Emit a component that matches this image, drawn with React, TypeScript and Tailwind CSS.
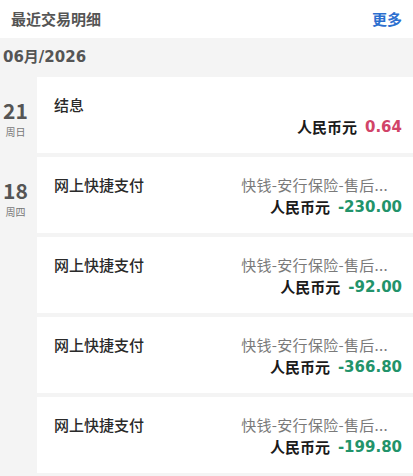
import React from "react";

type Txn = { title: string; desc?: string; amount: string; income?: boolean };
type Day = { day: string; week: string; items: Txn[] };

const days: Day[] = [
  { day: "21", week: "周日", items: [{ title: "结息", amount: "0.64", income: true }] },
  {
    day: "18",
    week: "周四",
    items: [
      { title: "网上快捷支付", desc: "快钱-安行保险-售后...", amount: "-230.00" },
      { title: "网上快捷支付", desc: "快钱-安行保险-售后...", amount: "-92.00" },
      { title: "网上快捷支付", desc: "快钱-安行保险-售后...", amount: "-366.80" },
      { title: "网上快捷支付", desc: "快钱-安行保险-售后...", amount: "-199.80" },
    ],
  },
];

const font = { fontFamily: '"Noto Sans CJK SC", "Noto Sans", sans-serif' };
const numFont = { fontFamily: '"DejaVu Sans", "Noto Sans CJK SC", sans-serif' };

const TxnCard = ({ t }: { t: Txn }) => (
  <div className="h-[76px] bg-white pl-[17px] pr-[11px] pt-[19px]">
    <div className="flex items-center justify-between h-[18px]">
      <span className="text-[15px] font-medium text-[#2a2a2a]">{t.title}</span>
      {t.desc && (
        <span className="text-[15px] tracking-[0.3px] text-[#7a7a7a] mr-[14px]">{t.desc}</span>
      )}
    </div>
    <div className="flex items-center justify-end h-[20px] mt-[3px]">
      <span className="text-[15px] font-bold text-[#1a1a1a]">人民币元</span>
      <span
        className={`ml-[8px] text-[15px] font-bold ${t.income ? "text-[#d14468]" : "text-[#22936a]"}`}
        style={numFont}
      >
        {t.amount}
      </span>
    </div>
  </div>
);

export default function App() {
  return (
    <div className="w-[413px] h-[476px] bg-[#f4f4f4] overflow-hidden" style={font}>
      <div className="h-[38px] bg-white flex items-center justify-between pl-[11px] pr-[11px]">
        <span className="text-[15px] font-bold text-[#555]">最近交易明细</span>
        <span className="text-[15px] font-bold text-[#2c6fcf]">更多</span>
      </div>
      <div className="h-[39px] flex items-center pl-[3px]">
        <span className="text-[15px] font-bold text-[#555]" style={numFont}>
          06月/2026
        </span>
      </div>
      <div className="flex flex-col gap-[4px]">
        {days.map((d) => (
          <div key={d.day} className="flex">
            <div className="w-[37px] shrink-0 flex flex-col items-center pt-[22px] pr-[6px]">
              <span className="text-[21px] leading-[22px] font-bold text-[#555]">{d.day}</span>
              <span className="text-[10px] leading-[14px] mt-[4px] text-[#777]">{d.week}</span>
            </div>
            <div className="flex-1 flex flex-col gap-[4px]">
              {d.items.map((t, i) => (
                <TxnCard key={i} t={t} />
              ))}
            </div>
          </div>
        ))}
      </div>
    </div>
  );
}
